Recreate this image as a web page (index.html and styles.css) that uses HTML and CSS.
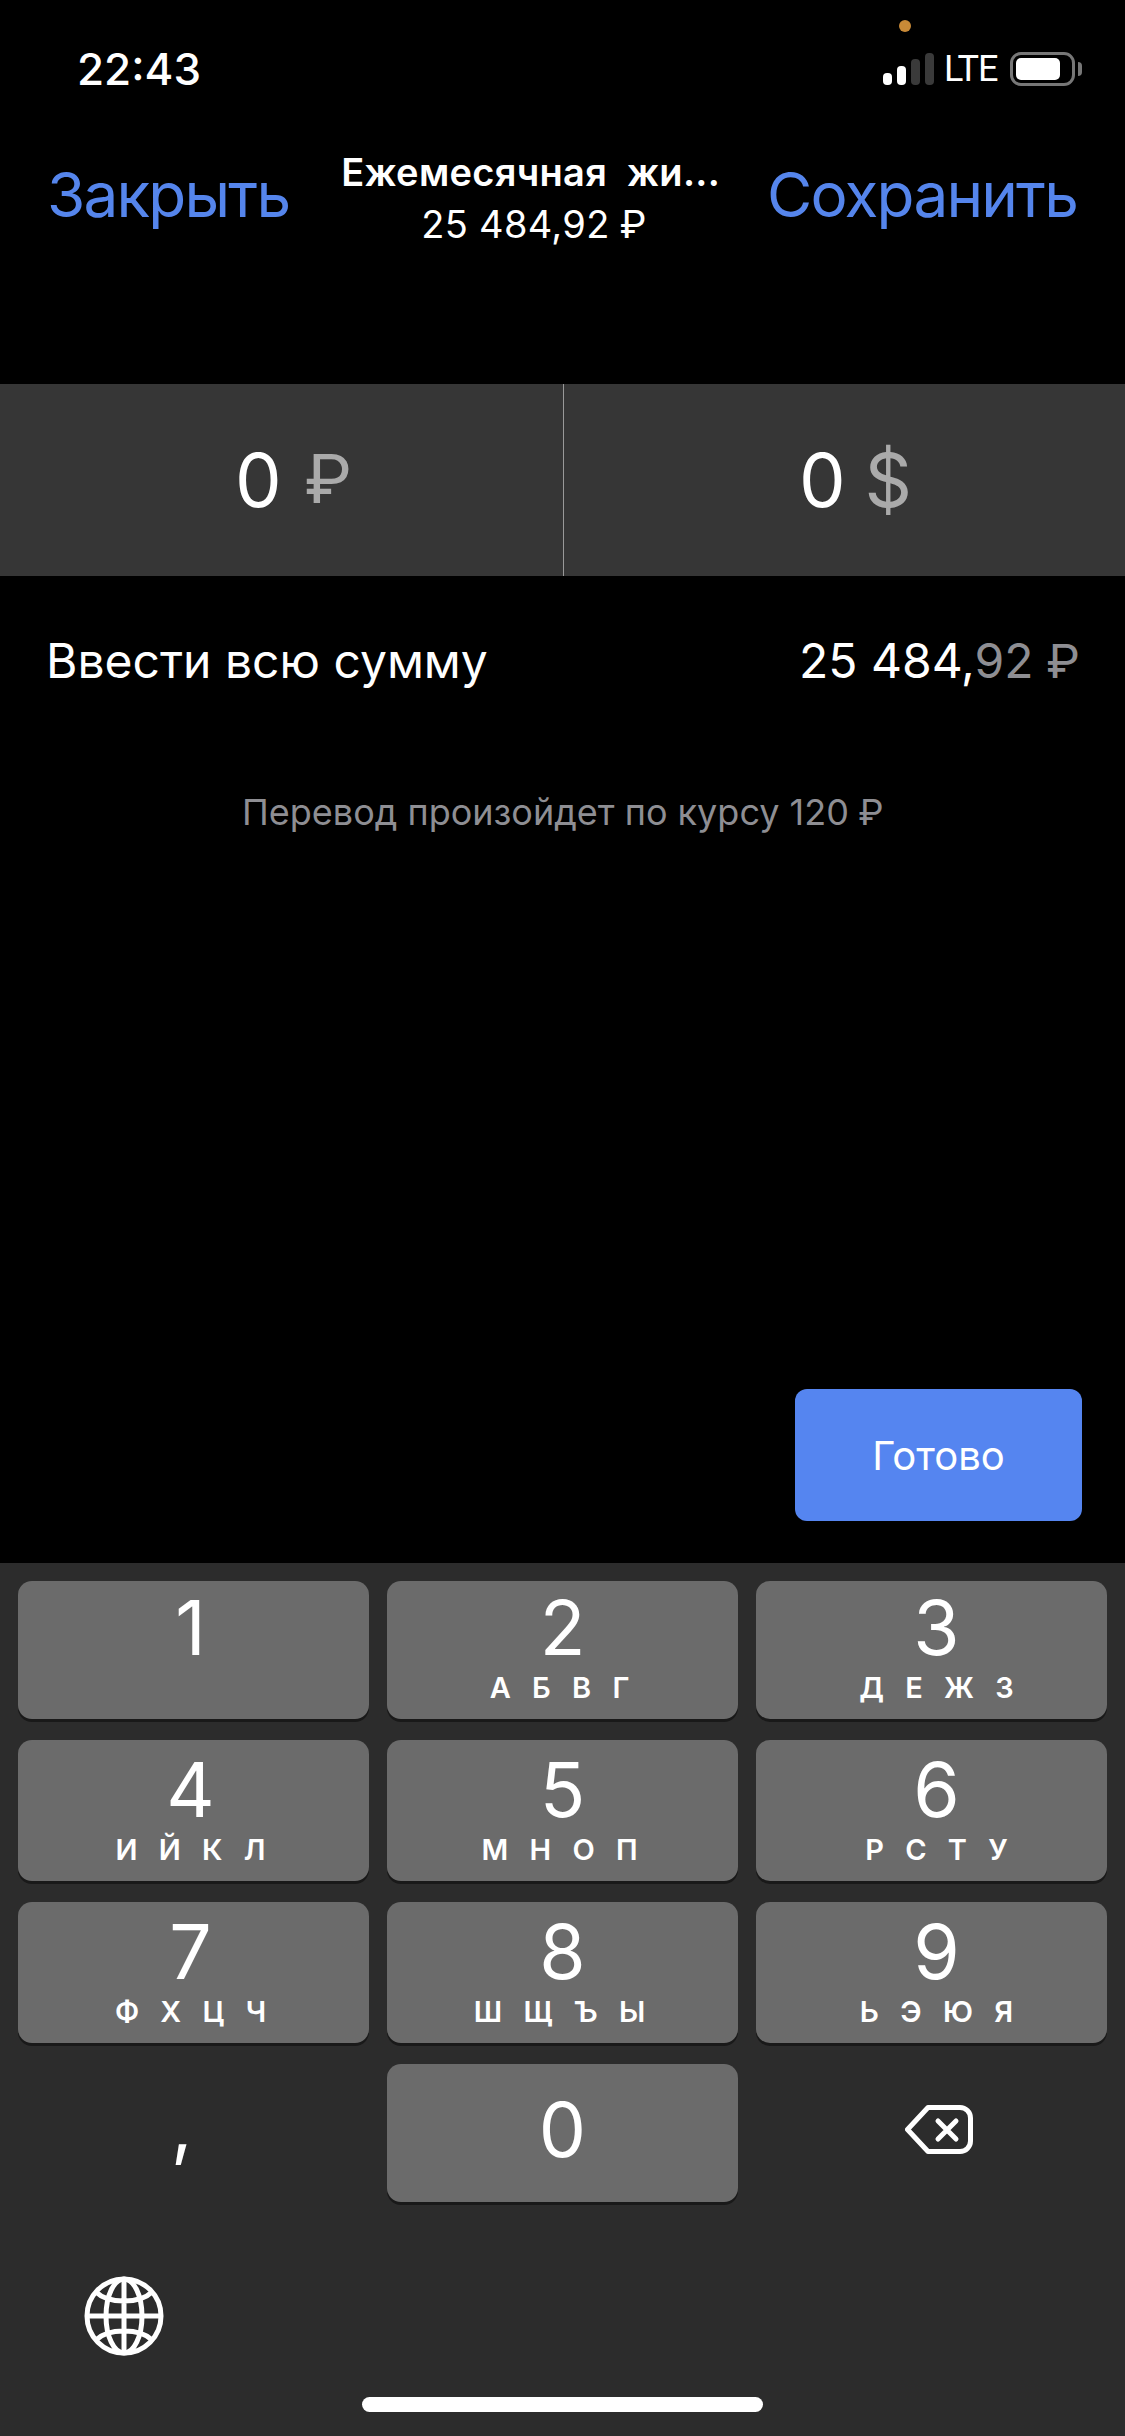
FILE: index.html
```html
<!DOCTYPE html>
<html lang="ru">
<head>
<meta charset="utf-8">
<title>Перевод</title>
<link rel="stylesheet" href="styles.css">
</head>
<body>
<div class="screen">
  <span class="dot"></span>
  <header class="status">
    <span class="time">22:43</span>
    <div class="status-right">
      <div class="signal">
        <span class="bar bar1"></span><span class="bar bar2"></span><span class="bar bar3 off"></span><span class="bar bar4 off"></span>
      </div>
      <span class="lte">LTE</span>
      <div class="battery"><span class="battery-fill"></span></div>
      <span class="battery-nub"></span>
    </div>
  </header>
  <nav class="nav">
    <span class="nav-btn">Закрыть</span>
    <div class="nav-title">
      <div class="nav-name">Ежемесячная&nbsp; жи...</div>
      <div class="nav-sum">25 484,92 <span class="rub">₽</span></div>
    </div>
    <span class="nav-btn">Сохранить</span>
  </nav>
  <section class="amounts">
    <div class="amount amount-left">0<span class="cur rub">₽</span></div>
    <div class="amount amount-right">0<span class="cur">$</span></div>
  </section>
  <section class="full">
    <span>Ввести всю сумму</span>
    <span class="full-sum">25 484,<span class="dim">92 <span class="rub">₽</span></span></span>
  </section>
  <p class="note">Перевод произойдет по курсу 120 <span class="rub">₽</span></p>
  <div class="done-row"><button class="done">Готово</button></div>
  <section class="keyboard">
    <div class="keys">
      <div class="key key-first col1"><span class="num">1</span></div>
      <div class="key key-first"><span class="num">2</span><span class="let">А Б В Г</span></div>
      <div class="key key-first col3"><span class="num">3</span><span class="let">Д Е Ж З</span></div>
      <div class="key col1"><span class="num">4</span><span class="let">И Й К Л</span></div>
      <div class="key"><span class="num">5</span><span class="let">М Н О П</span></div>
      <div class="key col3"><span class="num">6</span><span class="let">Р С Т У</span></div>
      <div class="key col1"><span class="num">7</span><span class="let">Ф Х Ц Ч</span></div>
      <div class="key"><span class="num">8</span><span class="let">Ш Щ Ъ Ы</span></div>
      <div class="key col3"><span class="num">9</span><span class="let">Ь Э Ю Я</span></div>
      <div class="plain comma">,</div>
      <div class="key key-zero"><span class="num">0</span></div>
      <div class="plain back">
        <svg class="back-icon" width="68" height="49" viewBox="0 0 68 49" fill="none" stroke="#fff" stroke-width="5" stroke-linecap="round" stroke-linejoin="round">
          <path d="M23 2.500H55a10.500 10.500 0 0 1 10.500 10.500V36a10.500 10.500 0 0 1-10.500 10.500H23L2.500 24.500Z"/>
          <path d="M33 16L51 34M51 16L33 34"/>
        </svg>
      </div>
    </div>
    <svg class="globe" width="80" height="80" viewBox="0 0 80 80" fill="none" stroke="#fff" stroke-width="5">
      <circle cx="40" cy="40" r="37"/>
      <ellipse cx="40" cy="40" rx="18" ry="37"/>
      <path d="M40 3V77M3 40H77M12 16C24 28 56 28 68 16M12 64C24 52 56 52 68 64"/>
    </svg>
    <span class="home"></span>
  </section>
</div>
</body>
</html>
```
FILE: styles.css
```css
* { box-sizing: border-box; }
html, body { margin: 0; padding: 0; background: #000; }
body { font-family: Inter, "Liberation Sans", sans-serif; color: #fff; }
.screen { position: relative; width: 1125px; height: 2436px; overflow: hidden; display: flex; flex-direction: column; background: #000; }
.dot { position: absolute; left: 899px; top: 20px; width: 12px; height: 12px; border-radius: 50%; background: #c98a37; }
.rub { font-family: Roboto, Inter, sans-serif; }

.status { height: 105px; padding: 45px 43px 0 77px; display: flex; justify-content: space-between; align-items: flex-start; }
.time { font-size: 44px; font-weight: 500; line-height: 48px; }
.status-right { display: flex; align-items: flex-end; margin-top: 7px; height: 34px; }
.signal { display: flex; align-items: flex-end; gap: 5px; height: 32px; margin-right: 10px; margin-bottom: 1px; }
.bar { width: 9px; background: #fff; border-radius: 4px; }
.bar.off { background: #3a3a3a; }
.bar1 { height: 12px; }
.bar2 { height: 19px; }
.bar3 { height: 26px; }
.bar4 { height: 32px; }
.lte { font-family: Roboto, sans-serif; font-size: 36px; line-height: 34px; font-weight: 400; letter-spacing: -1px; margin-right: 13px; width: 53px; }
.battery { width: 65px; height: 34px; border: 3px solid #777; border-radius: 11px; padding: 3px 0 0 3px; }
.battery-fill { display: block; width: 44px; height: 22px; background: #fff; border-radius: 5px; }
.battery-nub { width: 4px; height: 14px; margin: 0 0 10px 3px; background: #777; border-radius: 0 4px 4px 0; }

.nav { height: 279px; padding: 45px 48px 0 47px; display: flex; justify-content: space-between; align-items: flex-start; }
.nav-btn { font-size: 62px; letter-spacing: -1.8px; line-height: 84px; color: #5585ec; margin-top: 3px; }
.nav-title { text-align: center; padding-left: 5px; }
.nav-name { font-size: 38px; font-weight: 600; letter-spacing: 0.3px; line-height: 44px; }
.nav-sum { font-size: 38px; letter-spacing: 0.3px; line-height: 44px; margin-top: 8px; padding-left: 6px; }

.amounts { height: 192px; display: flex; background: #363636; }
.amount { flex: none; display: flex; justify-content: center; align-items: center; font-size: 74px; line-height: 84px; gap: 19px; padding-left: 22px; }
.amount-left { width: 563px; padding-left: 23px; gap: 24px; }
.amount-left .cur { font-size: 68px; }
.amount-right { width: 562px; border-left: 1px solid #999; }
.cur { color: #aaa; }

.full { display: flex; justify-content: space-between; padding: 56px 46px 0 46px; font-size: 48px; line-height: 58px; }
.dim { color: #8e8e93; }
.note { margin: 99px 0 0; text-align: center; font-size: 36px; line-height: 44px; color: #8e8e93; }

.done-row { flex: 1; display: flex; justify-content: flex-end; align-items: flex-end; padding: 0 43px 42px 0; }
.done { width: 287px; height: 132px; border: 0; border-radius: 12px; background: #5585f0; color: #fff; font-family: inherit; font-size: 40px; }

.keyboard { position: relative; height: 873px; background: #2c2c2c; padding: 18px 18px 0; }
.keys { display: grid; grid-template-columns: repeat(3, 351px); grid-template-rows: 138px 141px 141px 138px; gap: 21px 18px; }
.key { display: flex; flex-direction: column; align-items: center; padding-top: 14px; background: #6b6b6b; border-radius: 14px; box-shadow: 0 3px 0 #191919; }
.key-first { padding-top: 11px; }
.key-zero { padding-top: 30px; }
.num { font-size: 75px; line-height: 72px; }
.let { margin-top: 7px; font-size: 29px; line-height: 34px; font-weight: 600; letter-spacing: 6px; word-spacing: 2px; }
.col1 .num { margin-right: 6px; }
.col3 .num { margin-left: 10px; }
.col3 .let { margin-left: 16px; }
.plain { display: flex; }
.comma { font-size: 75px; line-height: 72px; padding: 25px 0 0 153px; }
.back { justify-content: center; padding: 41px 0 0; }
.back-icon { margin-left: 14px; }
.globe { position: absolute; left: 84px; top: 713px; }
.home { position: absolute; left: 362px; top: 834px; width: 401px; height: 15px; border-radius: 8px; background: #fff; }
```
